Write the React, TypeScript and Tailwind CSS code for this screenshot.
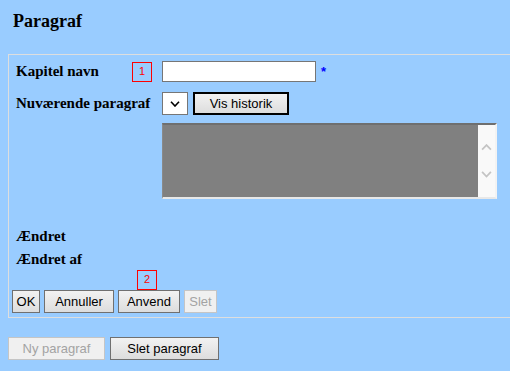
import React from 'react';

const serif = "font-['Liberation_Serif','Times_New_Roman',serif]";
const sans = "font-['Liberation_Sans',Arial,sans-serif]";

const btn =
  'h-[23px] text-[13px] leading-none border border-[#707070] bg-gradient-to-b from-[#f2f2f2] to-[#dddddd] text-black';
const btnOff =
  'h-[23px] text-[13px] leading-none border border-[#c5c5c5] bg-[#f0f0f0] text-[#a3a3a3]';

const Marker: React.FC<{ n: string }> = ({ n }) => (
  <div className={`w-[20px] h-[20px] border border-solid border-[#ff0000] text-[#ff0000] text-[11px] leading-[16px] text-center ${sans}`}>
    {n}
  </div>
);

const Chevron: React.FC<{ up?: boolean; color: string; w?: number }> = ({ up, color, w = 11 }) => (
  <svg width={w} height={w * 0.6} viewBox="0 0 10 6" fill="none">
    <path d={up ? 'M1 5.2 L5 1 L9 5.2' : 'M1 0.8 L5 5 L9 0.8'} stroke={color} strokeWidth="1.6" />
  </svg>
);

export default function App() {
  return (
    <div className={`w-[510px] h-[371px] overflow-hidden bg-[#99ccff] ${sans}`}>
      <div className={`pl-[13px] pt-[11px] h-[54px] text-[18px] leading-[20px] font-bold ${serif}`}>Paragraf</div>

      <div className="ml-[8px] w-[540px] border-t border-l border-b border-[#dedede] pt-[6px] pb-[4px]">
        <div className="flex items-center h-[21px]">
          <div className={`pl-[7px] w-[123px] text-[15px] font-bold ${serif}`}>Kapitel navn</div>
          <Marker n="1" />
          <div className="ml-[10px] w-[154px] h-[21px] bg-white border border-[#767676]" />
          <span className="ml-[5px] text-[13px] font-bold text-[#0000ff]">*</span>
        </div>

        <div className="flex items-center h-[23px] mt-[10px]">
          <div className={`pl-[7px] w-[153px] text-[15px] font-bold ${serif}`}>Nuværende paragraf</div>
          <div className="w-[26px] h-[23px] bg-white border border-[#767676] flex items-center justify-center">
            <Chevron color="#000" w={10} />
          </div>
          <button className={`ml-[5px] w-[96px] ${btn} border-2 border-black`}>Vis historik</button>
        </div>

        <div className="ml-[153px] mt-[8px] w-[335px] h-[76px] flex border-t-2 border-t-[#6f6f6f] border-l border-l-[#8a8a8a] border-r-2 border-r-[#f3f3f3] border-b-2 border-b-[#e8e8e8] bg-[#808080]">
          <div className="flex-1" />
          <div className="w-[17px] bg-[#f9f9f9] flex flex-col items-center justify-between py-[19px]">
            <Chevron up color="#c4c4c4" />
            <Chevron color="#c4c4c4" />
          </div>
        </div>

        <div className={`mt-[26px] pl-[7px] text-[15px] leading-[23px] font-bold ${serif}`}>Ændret</div>
        <div className={`pl-[7px] text-[15px] leading-[23px] font-bold ${serif}`}>Ændret af</div>

        <div className="pl-[128px] mt-[-1px]">
          <Marker n="2" />
        </div>
        <div className="flex gap-[4px] pl-[3px]">
          <button className={`${btn} w-[28px]`}>OK</button>
          <button className={`${btn} w-[70px]`}>Annuller</button>
          <button className={`${btn} w-[62px]`}>Anvend</button>
          <button className={`${btnOff} w-[33px]`}>Slet</button>
        </div>
      </div>

      <div className="flex gap-[5px] pl-[8px] mt-[19px]">
        <button className={`${btnOff} w-[97px]`}>Ny paragraf</button>
        <button className={`${btn} w-[109px]`}>Slet paragraf</button>
      </div>
    </div>
  );
}
